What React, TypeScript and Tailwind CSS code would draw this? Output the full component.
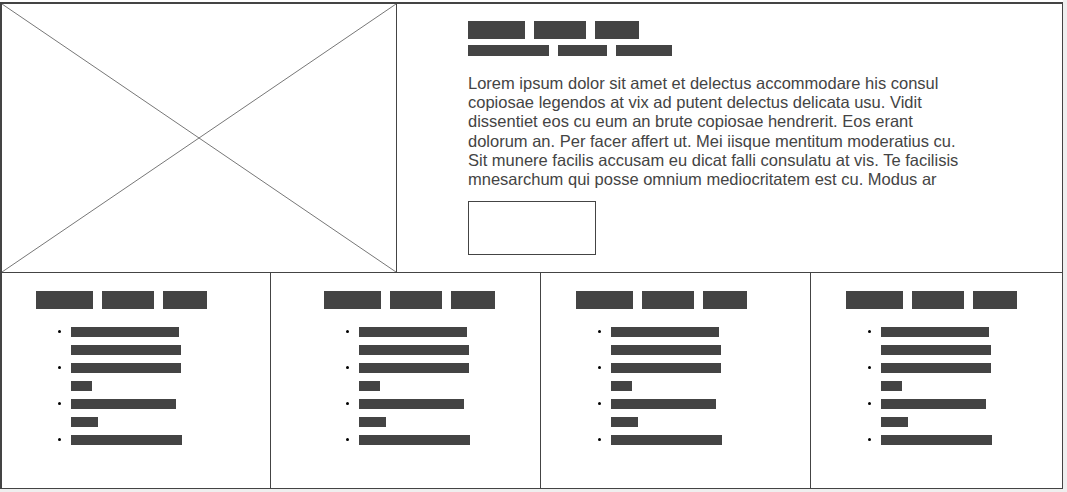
const bar = 'bg-[#444]';

const loremLines = [
  'Lorem ipsum dolor sit amet et delectus accommodare his consul',
  'copiosae legendos at vix ad putent delectus delicata usu. Vidit',
  'dissentiet eos cu eum an brute copiosae hendrerit. Eos erant',
  'dolorum an. Per facer affert ut. Mei iisque mentitum moderatius cu.',
  'Sit munere facilis accusam eu dicat falli consulatu at vis. Te facilisis',
  'mnesarchum qui posse omnium mediocritatem est cu. Modus ar',
];

const listRows: { w: number; bullet: boolean }[] = [
  { w: 108, bullet: true },
  { w: 110, bullet: false },
  { w: 110, bullet: true },
  { w: 21, bullet: false },
  { w: 105, bullet: true },
  { w: 27, bullet: false },
  { w: 111, bullet: true },
];

function Column({ width, pad }: { width: string; pad: string }) {
  return (
    <div className={`${width} pt-[18px] ${pad}`}>
      <div className="flex gap-[9px]">
        <div className={`h-[18px] w-[57px] ${bar}`} />
        <div className={`h-[18px] w-[52px] ${bar}`} />
        <div className={`h-[18px] w-[44px] ${bar}`} />
      </div>
      <ul className="mt-[18px] pl-[35px]">
        {listRows.map((r, i) => (
          <li key={i} className="relative h-[18px]">
            {r.bullet && (
              <span className="absolute left-[-13px] top-[3px] size-[3px] rounded-full bg-black" />
            )}
            <div className={`h-[10px] ${bar}`} style={{ width: r.w }} />
          </li>
        ))}
      </ul>
    </div>
  );
}

export default function App() {
  return (
    <div className="h-[492px] w-[1067px] bg-[#efefef]">
      <div className="h-[489px] w-[1063px] bg-white pt-[2px]">
        <div className="flex h-[487px] flex-col border border-t-2 border-l-2 border-[#444]">
          {/* hero */}
          <div className="flex h-[269px] shrink-0 border-b border-[#444]">
            <div className="h-full w-[395px] shrink-0 border-r border-[#444]">
              <svg width="394" height="268" viewBox="0 0 394 268" className="block">
                <line x1="0" y1="0" x2="394" y2="268" stroke="#777" strokeWidth="1" />
                <line x1="394" y1="0" x2="0" y2="268" stroke="#777" strokeWidth="1" />
              </svg>
            </div>
            <div className="pl-[71px] pt-[17px]">
              <div className="flex gap-[9px]">
                <div className={`h-[18px] w-[57px] ${bar}`} />
                <div className={`h-[18px] w-[52px] ${bar}`} />
                <div className={`h-[18px] w-[44px] ${bar}`} />
              </div>
              <div className="mt-[6px] flex gap-[9px]">
                <div className={`h-[11px] w-[81px] ${bar}`} />
                <div className={`h-[11px] w-[49px] ${bar}`} />
                <div className={`h-[11px] w-[56px] ${bar}`} />
              </div>
              <p className="mt-[18px] whitespace-nowrap font-['Liberation_Sans',Arial,sans-serif] text-[16.5px] leading-[19.2px] text-[#444]">
                {loremLines.map((l, i) => (
                  <span key={i} className="block">
                    {l}
                  </span>
                ))}
              </p>
              <div className="mt-[12px] h-[54px] w-[128px] border border-[#444]" />
            </div>
          </div>
          {/* columns */}
          <div className="flex flex-1">
            <Column width="w-[269px] border-r border-[#444]" pad="pl-[34px]" />
            <Column width="w-[270px] border-r border-[#444]" pad="pl-[53px]" />
            <Column width="w-[270px] border-r border-[#444]" pad="pl-[35px]" />
            <Column width="flex-1" pad="pl-[35px]" />
          </div>
        </div>
      </div>
    </div>
  );
}
